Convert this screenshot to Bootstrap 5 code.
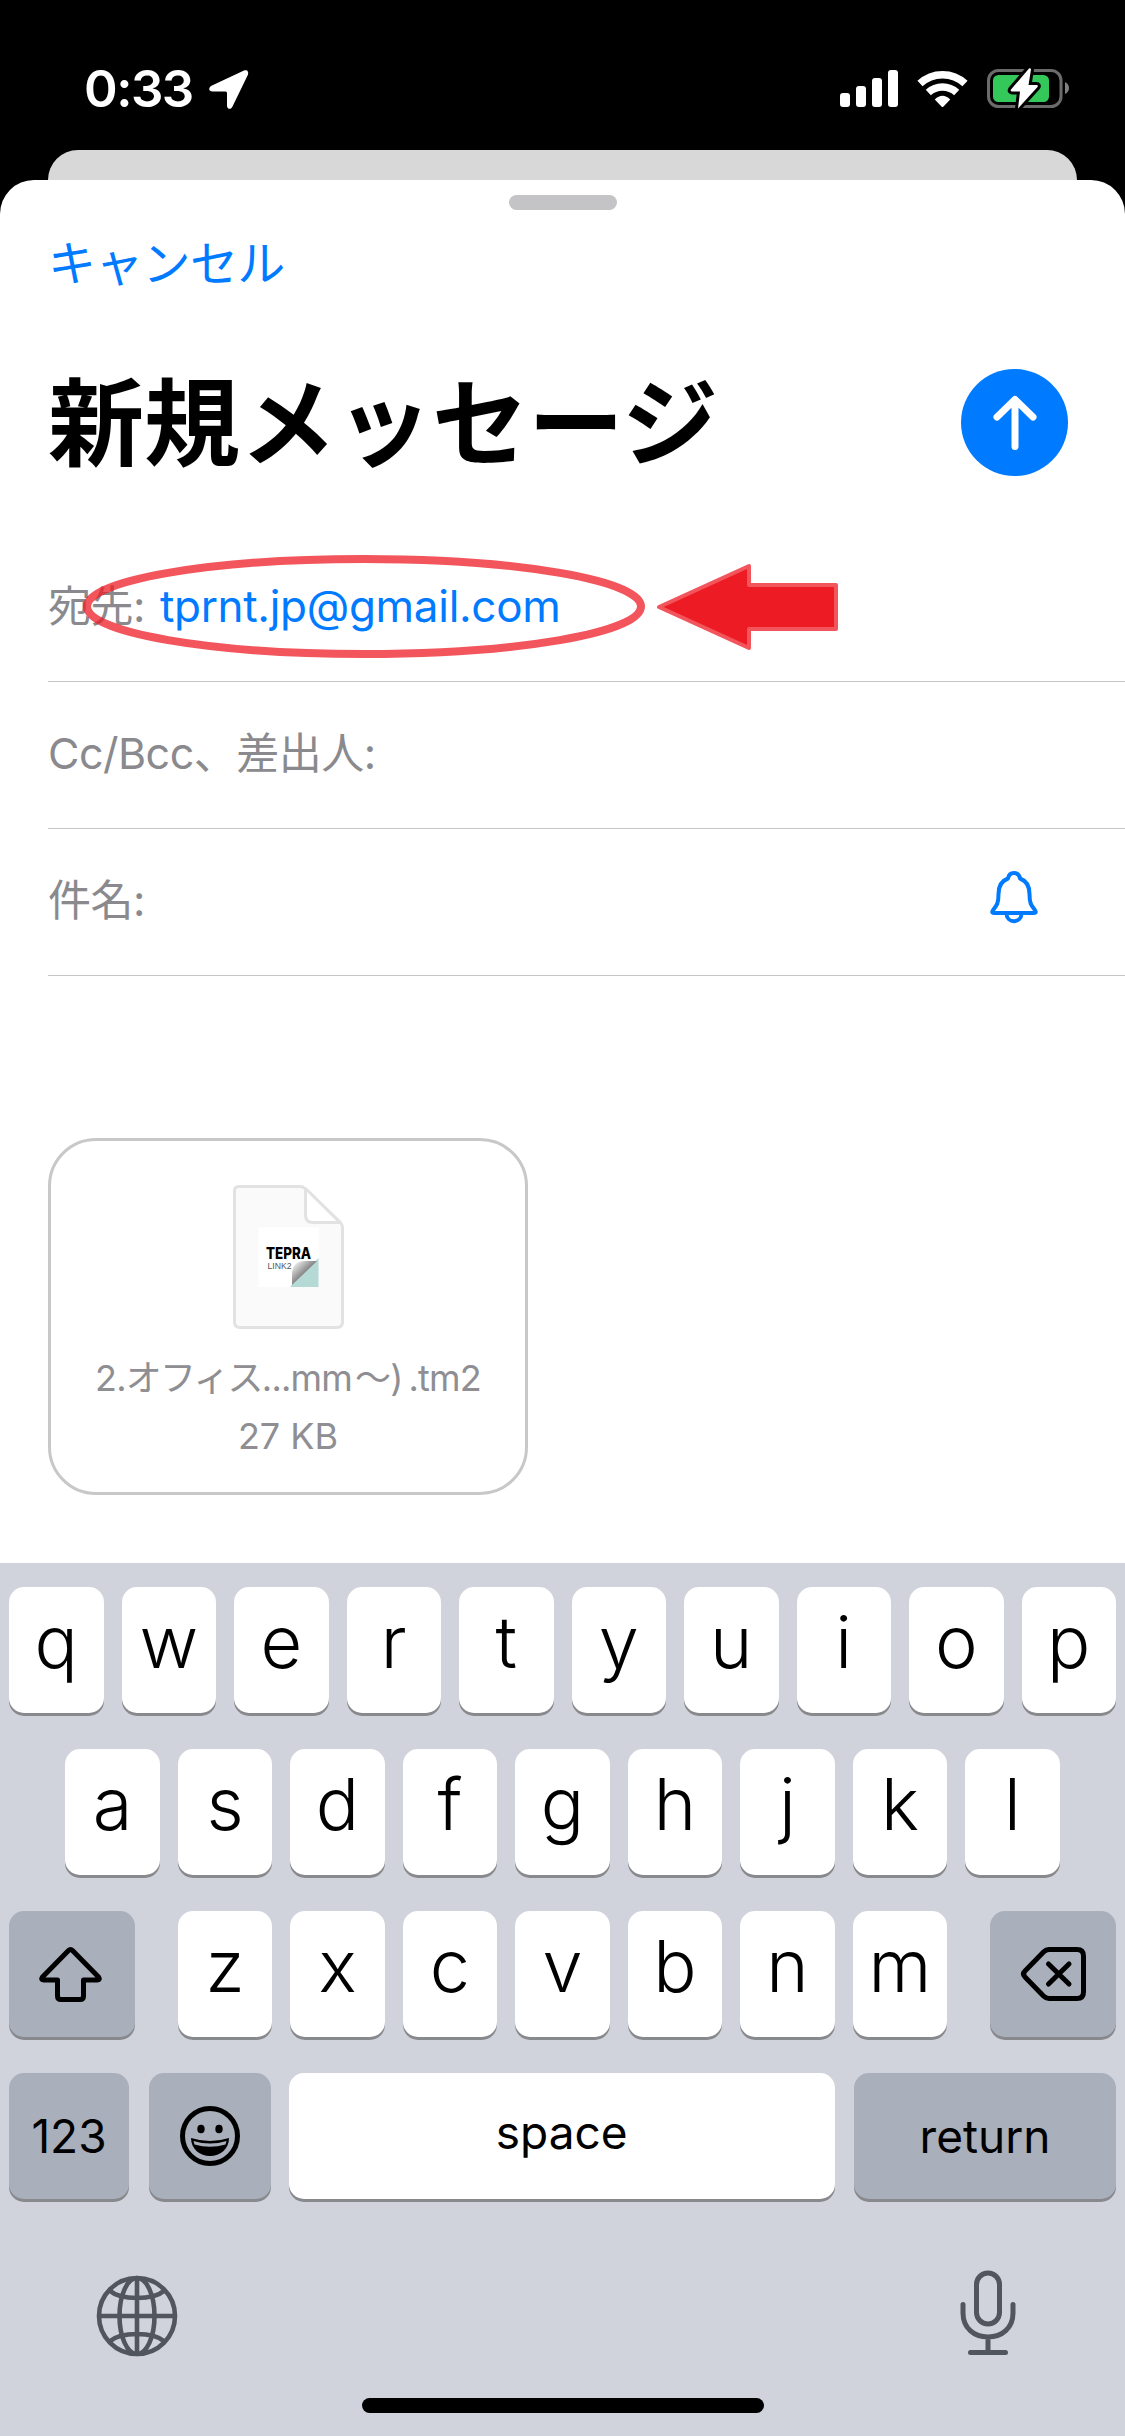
<!DOCTYPE html>
<html lang="ja">
<head>
<meta charset="utf-8">
<meta name="viewport" content="width=device-width, initial-scale=1">
<title>新規メッセージ</title>
<link href="https://cdn.jsdelivr.net/npm/bootstrap@5.3.0/dist/css/bootstrap.min.css" rel="stylesheet">
<style>
body{font-family:Inter,"Noto Sans CJK JP",sans-serif;width:1125px;height:2436px;overflow:hidden;line-height:1}
svg{display:block;overflow:visible}
.status{height:150px;padding:0 56px 0 84px}
.clock{font-size:51px;font-weight:600;line-height:60px;margin-top:59px;letter-spacing:-1.5px}
.loc-icon{margin-top:70px}
.status-icons{margin-top:66px}
.back-sheet{height:60px;margin:0 48px -30px;border-radius:30px 30px 0 0;background:#d8d8d8}
.sheet{height:1383px;border-radius:34px 34px 0 0;position:relative}
.grabber{width:108px;height:15px;background:#c4c4c6;margin-top:15px}
.ios-blue{color:#007aff}
.cancel{font-size:48px;line-height:60px;margin:24px 0 0 48px;letter-spacing:-.7px}
.title-row{height:111px;margin:73px 57px 0 48px}
.title-row h1{font-size:96px;line-height:110px;color:#000}
.send{width:107px;height:107px;background:#007aff}
.fields{margin:57px 0 0 48px}
.field-row{height:147px;border-bottom:1px solid #c6c6c8;color:#8a8a8e;font-size:43px;letter-spacing:-.5px;padding:0 87px 4px 0}
.field-row span{line-height:60px}
.field-row .address{font-size:44px;letter-spacing:-.3px;margin-left:15px}
.bell{margin-bottom:6px}
.attach{width:480px;height:357px;border:3px solid #c8c8c8;border-radius:48px;margin:162px 0 0 48px;color:#8e8e93;font-size:36px;padding-top:44px}
.attach-text{line-height:58px}
.file-name{margin-top:20px;letter-spacing:-.8px}
.file-name .kana{letter-spacing:-1.8px}
.file-name .wave{margin:0 6px 0 3px}
.keyboard{height:873px;background:#d0d3db;padding:24px 9px 0}
.krow{gap:18px;margin-bottom:36px;height:126px}
.kkey{width:94.5px;height:126px;border-radius:15px;background:#fff;box-shadow:0 3px 0 #88898d;color:#000;font-size:72px;font-weight:350;line-height:110px;text-align:center}
.kfn{background:#a9afbb}
.kwide{width:126px}
.knum{width:120px}
.kemoji{width:121.5px;margin-left:2px}
.kspace{margin-right:1px}
.kreturn{width:262px}
.ktext{font-size:46px;font-weight:400;line-height:126px}
.kspace.ktext{line-height:118px}
.kbottom{padding:35px 100px 0 87px}
.globe{margin-top:5px}
.homebar{width:402px;height:15px;background:#000;margin:41px auto 0}
.markup{position:absolute;left:0;top:360px}
</style>
<script src="https://cdn.jsdelivr.net/npm/bootstrap@5.3.0/dist/js/bootstrap.bundle.min.js"></script>
</head>
<body class="bg-black">
<header class="status d-flex align-items-start justify-content-between text-white">
  <div class="d-flex">
    <span class="clock">0:33</span>
    <svg class="loc-icon ms-3" width="40" height="39" viewBox="0 0 40 39"><path fill="#fff" d="M35 .5 3 15.5C-1 17.500-.5 21.500 3.500 21.500H16.500Q18 21.500 18 23V35.500C18 39.500 22 40 23.500 36.500L38.800 5C40.200 1.500 38-.8 35 .5Z"/></svg>
  </div>
  <svg class="status-icons" width="229" height="44" viewBox="840 66 229 44">
    <g fill="#fff"><rect x="840" y="93" width="10" height="14" rx="3"/><rect x="856" y="86" width="10" height="21" rx="3"/><rect x="872" y="78" width="10" height="29" rx="3"/><rect x="888" y="70" width="10" height="37" rx="3"/></g>
    <g fill="none" stroke="#fff" stroke-width="7.500"><path d="M920 83.500A33 33 0 0 1 965 83.500"/><path d="M928.300 92.500A21 21 0 0 1 956.700 92.500"/></g>
    <path fill="#fff" d="M934.800 99.500Q942.500 92 950.200 99.500L943.500 106.500Q942.500 107.500 941.500 106.500Z"/>
    <rect x="988.500" y="70.500" width="72.500" height="36" rx="10" fill="none" stroke="#6b6b6b" stroke-width="3"/>
    <path d="M1065 82Q1069 84 1069 88T1065 94Z" fill="#808080"/>
    <rect x="993" y="75" width="56" height="27" rx="5.500" fill="#34c759"/>
    <path d="M1029 68.500 1011 89.500Q1010 91.500 1012 91.500H1020L1018 108.500 1037.500 87Q1038.500 85 1036.500 85H1028.500L1031 69.500Q1030.500 67.500 1029 68.500Z" fill="#fff" stroke="#000" stroke-width="6" paint-order="stroke" stroke-linejoin="round"/>
  </svg>
</header>
<div class="back-sheet"></div>
<main class="sheet bg-white d-flex flex-column">
  <div class="grabber rounded-pill align-self-center flex-shrink-0"></div>
  <div class="cancel ios-blue">キャンセル</div>
  <div class="title-row d-flex align-items-center justify-content-between">
    <h1 class="fw-bold m-0">新規メッセージ</h1>
    <div class="send rounded-circle d-flex align-items-center justify-content-center">
      <svg width="44" height="54" viewBox="0 0 44 54" fill="none" stroke="#fff" stroke-width="7" stroke-linecap="round" stroke-linejoin="round"><path d="M22 50.500V4M4 21 22 3.500 40 21"/></svg>
    </div>
  </div>
  <div class="fields">
    <div class="field-row d-flex align-items-center"><span>宛先:</span><span class="ios-blue address">tprnt.jp@gmail.com</span></div>
    <div class="field-row d-flex align-items-center"><span>Cc/Bcc、差出人:</span></div>
    <div class="field-row d-flex align-items-center justify-content-between"><span>件名:</span>
      <svg class="bell" width="48" height="52" viewBox="0 0 48 52" fill="none" stroke="#007aff" stroke-width="4" stroke-linejoin="round"><path d="M24 2C20.500 2 18.500 4.500 18 7.500C11 10 8.500 16 8.500 23C8.500 32 7 34 3.500 38.500C1.500 41 2 42 4 42H44C46 42 46.500 41 44.500 38.500C41 34 39.500 32 39.500 23C39.500 16 37 10 30 7.500C29.500 4.500 27.500 2 24 2Z"/><path d="M16.500 43C17 52.500 31 52.500 31.500 43"/></svg>
    </div>
  </div>
  <section class="attach d-flex flex-column align-items-center">
    <svg width="111" height="144" viewBox="0 0 111 144">
      <defs><linearGradient id="curl" x1="0" y1="0" x2="1" y2="1"><stop offset=".1" stop-color="#eee"/><stop offset=".55" stop-color="#777"/></linearGradient></defs>
      <path d="M6 1.500H67Q70 1.500 72 3.500L107 37Q109.500 39.500 109.500 42.500V137Q109.500 142.500 104 142.500H7Q1.500 142.500 1.500 137V6Q1.500 1.500 6 1.500Z" fill="#fafafa" stroke="#e2e2e2" stroke-width="3"/>
      <path d="M72.500 3.500V30Q72.500 37.500 80 37.500H107Z" fill="#fff" stroke="#e2e2e2" stroke-width="3" stroke-linejoin="round"/>
      <rect x="25.500" y="42.500" width="60" height="59.500" fill="#fff"/>
      <text x="33" y="73.500" font-size="16" font-weight="800" textLength="45" lengthAdjust="spacingAndGlyphs">TEPRA</text>
      <text x="34.500" y="84" font-size="9" fill="#555" textLength="24" lengthAdjust="spacingAndGlyphs" font-family="Liberation Sans">LINK2</text>
      <path d="M85.500 73V102H57Z" fill="#b5d9d4"/>
      <path d="M59 100V88Q60 76 72 76H84Z" fill="url(#curl)"/>
    </svg>
    <div class="attach-text file-name text-nowrap">2.<span class="kana">オフィス</span>...mm<span class="wave">～)</span>.tm2</div>
    <div class="attach-text">27 KB</div>
  </section>
  <svg class="markup" width="1125" height="130" viewBox="0 540 1125 130">
    <ellipse cx="364" cy="606.500" rx="277" ry="47.500" fill="none" stroke="#ed1c24" stroke-opacity=".75" stroke-width="8"/>
    <path d="M659 607 749 566V585H836V629H749V648Z" fill="#ed1c24" stroke="#f2555b" stroke-width="4" stroke-linejoin="round"/>
  </svg>
</main>
<footer class="keyboard">
  <div class="krow d-flex justify-content-center"><div class="kkey">q</div><div class="kkey">w</div><div class="kkey">e</div><div class="kkey">r</div><div class="kkey">t</div><div class="kkey">y</div><div class="kkey">u</div><div class="kkey">i</div><div class="kkey">o</div><div class="kkey">p</div></div>
  <div class="krow d-flex justify-content-center"><div class="kkey">a</div><div class="kkey">s</div><div class="kkey">d</div><div class="kkey">f</div><div class="kkey">g</div><div class="kkey">h</div><div class="kkey">j</div><div class="kkey">k</div><div class="kkey">l</div></div>
  <div class="krow d-flex justify-content-between">
    <div class="kkey kfn kwide d-flex align-items-center justify-content-center"><svg class="me-1" width="63" height="55" viewBox="0 0 63 55" fill="none" stroke="#000" stroke-width="5" stroke-linejoin="round"><path d="M29.500 3.500 3.500 30Q1.500 33 4.500 33H18.500V49Q18.500 52.500 22 52.500H41Q44.500 52.500 44.500 49V33H58.500Q61.500 33 59.500 30L33.500 3.500Q31.500 1.500 29.500 3.500Z"/></svg></div>
    <div class="d-flex krow m-0"><div class="kkey">z</div><div class="kkey">x</div><div class="kkey">c</div><div class="kkey">v</div><div class="kkey">b</div><div class="kkey">n</div><div class="kkey">m</div></div>
    <div class="kkey kfn kwide d-flex align-items-center justify-content-center"><svg width="65" height="54" viewBox="0 0 65 54" fill="none" stroke="#000" stroke-width="5" stroke-linejoin="round" stroke-linecap="round"><path d="M28 2.500H56Q62.500 2.500 62.500 9V45Q62.500 51.500 56 51.500H28Q25 51.500 22.500 49L4 30Q1 27 4 24L22.500 5Q25 2.500 28 2.500Z"/><path d="M27.500 17 48 37M48 17 27.500 37"/></svg></div>
  </div>
  <div class="krow d-flex">
    <div class="kkey kfn ktext knum">123</div>
    <div class="kkey kfn kemoji d-flex align-items-center justify-content-center"><svg width="60" height="60" viewBox="0 0 60 60"><circle cx="30" cy="30" r="27.500" fill="none" stroke="#000" stroke-width="5"/><ellipse cx="21" cy="23" rx="3.700" ry="4.300"/><ellipse cx="39" cy="23" rx="3.700" ry="4.300"/><path d="M11 32Q30 38 49 32C49 43 40 50 30 50S11 43 11 32Z"/><path d="M13.500 35Q30 40 46.500 35L45.500 38.500Q30 43 14.500 38.500Z" fill="#a9afbb"/></svg></div>
    <div class="kkey ktext kspace flex-fill">space</div>
    <div class="kkey kfn ktext kreturn">return</div>
  </div>
  <div class="kbottom d-flex justify-content-between align-items-start">
    <svg class="globe" width="82" height="82" viewBox="0 0 82 82" fill="none" stroke="#51555e" stroke-width="4.600"><circle cx="41" cy="41" r="38"/><ellipse cx="41" cy="41" rx="17.500" ry="38"/><path d="M41 3V79M3 41H79M13.500 15.500Q22 23 41 23T68.500 15.500M13.500 66.500Q22 59 41 59T68.500 66.500"/></svg>
    <svg width="56" height="86" viewBox="0 0 56 86" fill="none" stroke="#51555e" stroke-width="5" stroke-linecap="round"><rect x="16.500" y="3" width="23" height="51" rx="11.500"/><path d="M3 34.500V43C3 58 14 67 28 67S53 58 53 43V34.500M28 67V82M10.500 82.500H45.500"/></svg>
  </div>
  <div class="homebar rounded-pill"></div>
</footer>
</body>
</html>
